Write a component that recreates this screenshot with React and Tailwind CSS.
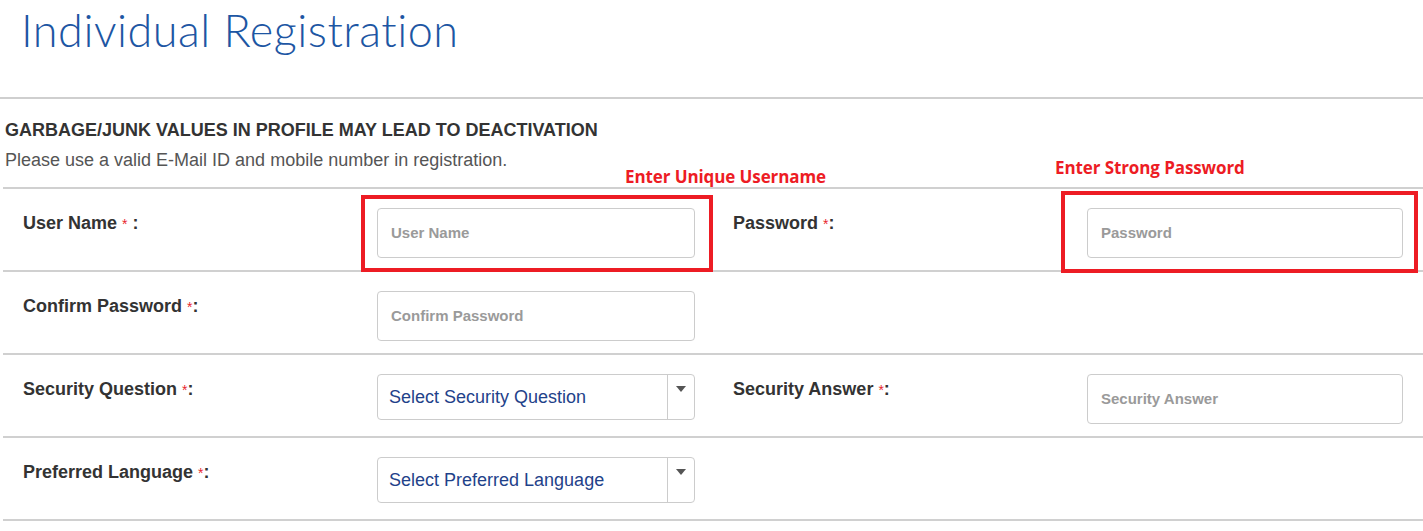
import React from "react";

function Star() {
  return <span className="text-[#e8262d] font-normal text-[14px] align-top relative top-[1px]">*</span>;
}

function TextInput({ placeholder }) {
  return (
    <div className="h-[50px] w-full rounded-[4px] border border-[#cccccc] bg-white flex items-center pl-[13px]">
      <span className="text-[15px] font-bold text-[#9a9a9a]">{placeholder}</span>
    </div>
  );
}

function SelectBox({ value }) {
  return (
    <div className="h-[46px] w-full rounded-[4px] border border-[#cccccc] bg-white flex">
      <div className="flex-1 flex items-center pl-[11px] pt-[1px] text-[18px] text-[#1f428a]">{value}</div>
      <div className="w-[27px] border-l border-[#cccccc] flex justify-center pt-[11px]">
        <svg width="10" height="6" viewBox="0 0 10 6">
          <path d="M0 0 L10 0 L5 6 Z" fill="#555555" />
        </svg>
      </div>
    </div>
  );
}

function Label({ children, className = "" }) {
  return (
    <div className={`mt-[4px] text-[18px] leading-[22px] font-bold text-[#333333] ${className}`}>{children}</div>
  );
}

function Row({ children }) {
  return (
    <div className="grid grid-cols-[374px_318px_392px_316px] h-[83px] pt-[19px] border-b-2 border-[#d0d0d0]">
      {children}
    </div>
  );
}

export default function App() {
  return (
    <div className="w-[1423px] h-[531px] bg-white font-['Liberation_Sans',Arial,sans-serif] overflow-hidden">
      <div className="h-[99px] border-b-2 border-[#cfcfcf] pl-[21px] pt-[2px]">
        <h1 className="font-['Lato',sans-serif] font-light text-[45px] leading-[56px] text-[#1d56a3] tracking-[0.5px]">
          Individual Registration
        </h1>
      </div>

      <div className="ml-[3px]">
        <div className="h-[90px] pt-[20px] pl-[2px] border-b-2 border-[#d0d0d0]">
          <div className="text-[18px] leading-[22px] font-bold text-[#333333]">
            GARBAGE/JUNK VALUES IN PROFILE MAY LEAD TO DEACTIVATION
          </div>
          <div className="mt-[8px] text-[18px] leading-[22px] text-[#555555]">
            Please use a valid E-Mail ID and mobile number in registration.
          </div>
        </div>

        <Row>
          <Label className="pl-[20px]">
            User Name <Star /> :
          </Label>
          <div className="relative">
            <TextInput placeholder="User Name" />
            <div className="absolute left-[-16px] top-[-13px] w-[352px] h-[77px] border-4 border-[#ed1c24]" />
            <div className="absolute left-[248px] top-[-42px] whitespace-nowrap font-['Open_Sans',sans-serif] font-bold text-[17px] leading-[22px] text-[#ed1c24] tracking-[-0.1px]">
              Enter Unique Username
            </div>
          </div>
          <Label className="pl-[38px]">
            Password <Star />:
          </Label>
          <div className="relative">
            <TextInput placeholder="Password" />
            <div className="absolute left-[-26px] top-[-17px] w-[357px] h-[82px] border-4 border-[#ed1c24]" />
            <div className="absolute left-[-32px] top-[-51px] whitespace-nowrap font-['Open_Sans',sans-serif] font-bold text-[17px] leading-[22px] text-[#ed1c24] tracking-[-0.1px]">
              Enter Strong Password
            </div>
          </div>
        </Row>

        <Row>
          <Label className="pl-[20px]">
            Confirm Password <Star />:
          </Label>
          <div>
            <TextInput placeholder="Confirm Password" />
          </div>
          <div />
          <div />
        </Row>

        <Row>
          <Label className="pl-[20px]">
            Security Question <Star />:
          </Label>
          <div>
            <SelectBox value="Select Security Question" />
          </div>
          <Label className="pl-[38px]">
            Security Answer <Star />:
          </Label>
          <div>
            <TextInput placeholder="Security Answer" />
          </div>
        </Row>

        <Row>
          <Label className="pl-[20px]">
            Preferred Language <Star />:
          </Label>
          <div>
            <SelectBox value="Select Preferred Language" />
          </div>
          <div />
          <div />
        </Row>
      </div>
    </div>
  );
}
